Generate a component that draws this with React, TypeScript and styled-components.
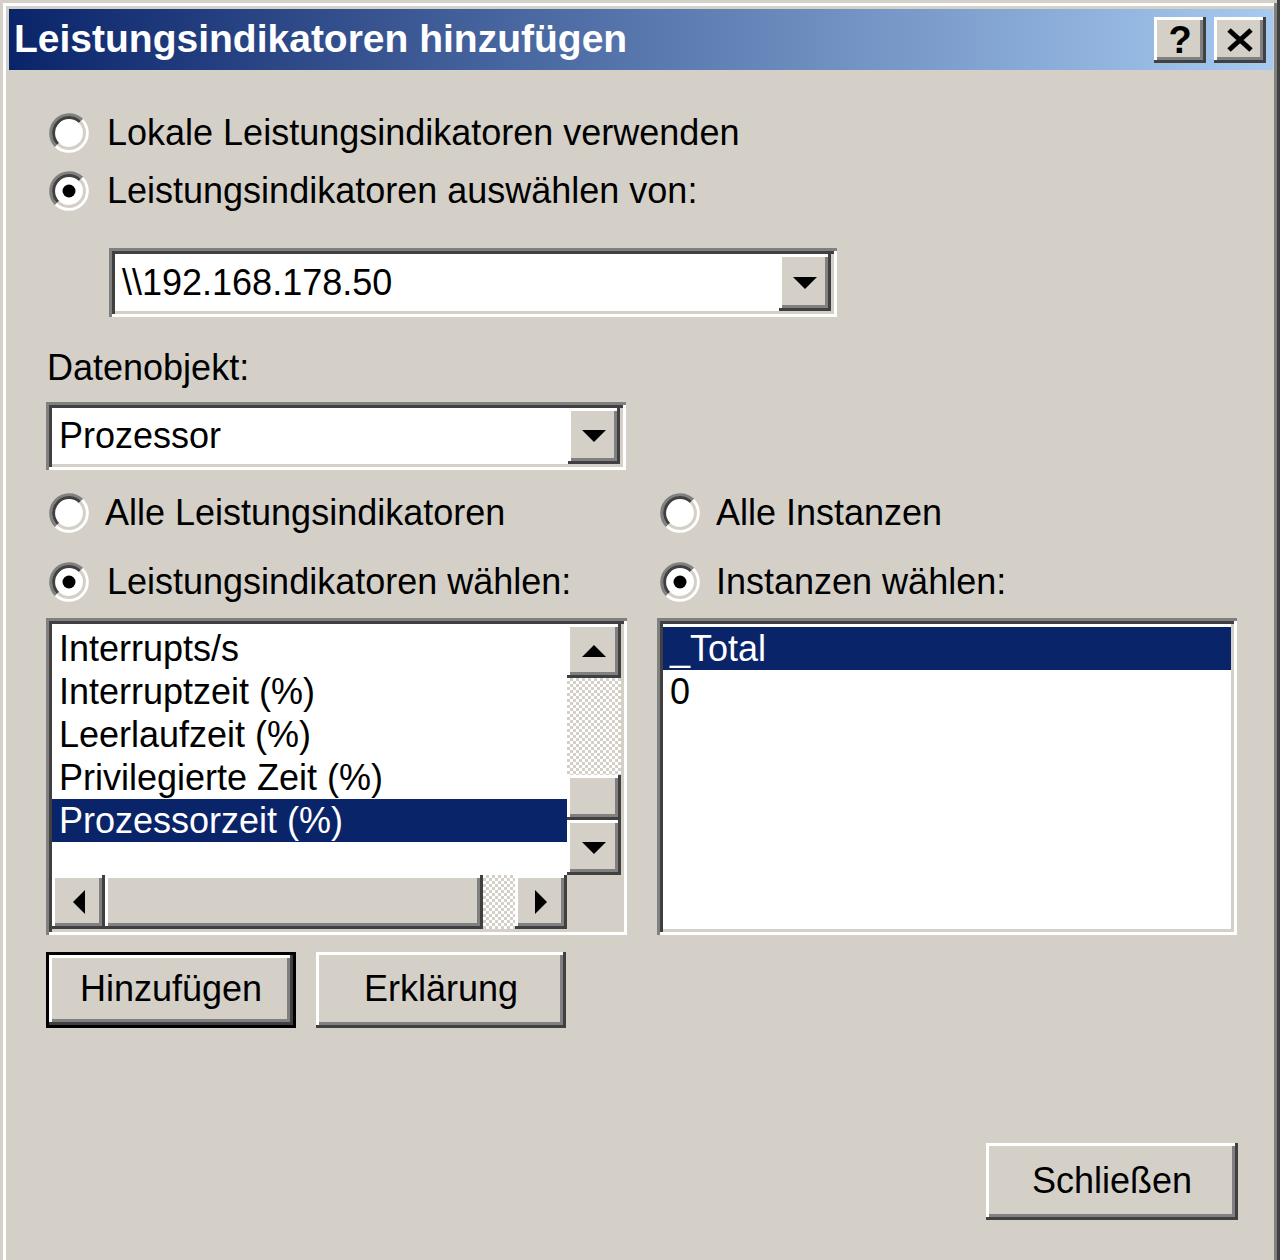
import React from "react";
import styled, { createGlobalStyle, css } from "styled-components";

// Win2000 system colours
const FACE = "#d4d0c8";
const SHADOW = "#808080";
const DARK = "#404040";
const HILITE = "#ffffff";
const SELECT = "#0a246a";

const GlobalStyle = createGlobalStyle`
  html, body {
    margin: 0;
    padding: 0;
    background: ${FACE};
  }
  body {
    font-family: "Liberation Sans", Arial, sans-serif;
    font-size: 36px;
    color: #000;
  }
`;

const raised = css`
  box-shadow: inset -3px -3px ${DARK}, inset 3px 3px ${HILITE},
    inset -6px -6px ${SHADOW}, inset 6px 6px ${FACE};
`;

const sunken = css`
  box-shadow: inset 3px 3px ${SHADOW}, inset -3px -3px ${HILITE},
    inset 6px 6px ${DARK}, inset -6px -6px ${FACE};
`;

const checker = css`
  background: repeating-conic-gradient(${FACE} 0% 25%, #fff 0% 50%) 0 0 / 6px
    6px;
`;

/* ---------- window frame ---------- */

const Window = styled.div`
  width: 1280px;
  height: 1260px;
  box-sizing: border-box;
  padding: 9px 7px 0 9px;
  background: ${FACE};
  box-shadow: inset -3px 0 ${DARK}, inset 3px 3px ${FACE},
    inset -6px 0 ${SHADOW}, inset 6px 6px ${HILITE};
  display: flex;
  flex-direction: column;
`;

const TitleBar = styled.div`
  height: 61px;
  flex-shrink: 0;
  display: flex;
  align-items: center;
  padding: 0 7px 0 5px;
  background: linear-gradient(90deg, ${SELECT} 0%, #a6caf0 100%);
`;

const TitleText = styled.div`
  flex: 1;
  color: #fff;
  font-weight: bold;
  font-size: 39px;
  line-height: 1;
  padding-bottom: 2px;
`;

const TitleButton = styled.div`
  width: 52px;
  height: 46px;
  margin-left: 8px;
  background: ${FACE};
  ${raised};
  display: grid;
  place-items: center;
  font-weight: bold;
  font-size: 38px;
  line-height: 1;
`;

/* ---------- body ---------- */

const Body = styled.div`
  flex: 1;
  display: flex;
  flex-direction: column;
  padding: 0 35px 0 37px;
`;

const RadioGroup = styled.div<{ $top: number; $gap: number }>`
  display: flex;
  flex-direction: column;
  gap: ${(p) => p.$gap}px;
  margin-top: ${(p) => p.$top}px;
`;

const RadioRow = styled.label<{ $gap?: number }>`
  height: 58px;
  display: flex;
  align-items: center;
  gap: ${(p) => p.$gap ?? 18}px;
  white-space: nowrap;
`;

const RadioSvg = styled.svg`
  width: 40px;
  height: 40px;
  margin-left: 3px;
  flex-shrink: 0;
`;

const Radio: React.FC<{ checked?: boolean }> = ({ checked }) => (
  <RadioSvg viewBox="0 0 40 40">
    <circle cx="20" cy="20" r="17" fill="#fff" />
    <path d="M6.92 33.08 A18.5 18.5 0 0 1 33.08 6.92" stroke={SHADOW} strokeWidth="3" fill="none" />
    <path d="M33.08 6.92 A18.5 18.5 0 0 1 6.92 33.08" stroke={HILITE} strokeWidth="3" fill="none" />
    <path d="M9.04 30.96 A15.5 15.5 0 0 1 30.96 9.04" stroke={DARK} strokeWidth="3" fill="none" />
    <path d="M30.96 9.04 A15.5 15.5 0 0 1 9.04 30.96" stroke={FACE} strokeWidth="3" fill="none" />
    {checked && <circle cx="20" cy="20" r="6.5" fill="#000" />}
  </RadioSvg>
);

const Combo = styled.div<{ $width: number; $height: number; $top: number; $indent?: number }>`
  width: ${(p) => p.$width}px;
  height: ${(p) => p.$height}px;
  margin-top: ${(p) => p.$top}px;
  margin-left: ${(p) => p.$indent ?? 0}px;
  box-sizing: border-box;
  padding: 6px;
  background: #fff;
  ${sunken};
  display: flex;
  align-items: center;
`;

const ComboText = styled.div`
  flex: 1;
  padding-left: 7px;
  white-space: nowrap;
`;

const DropButton = styled.div`
  width: 52px;
  align-self: stretch;
  background: ${FACE};
  ${raised};
  display: grid;
  place-items: center;
`;

const Arrow: React.FC<{ dir: "up" | "down" | "left" | "right" }> = ({ dir }) => {
  const pts = {
    down: "0,0 24,0 12,12",
    up: "12,0 24,12 0,12",
    left: "12,0 12,24 0,12",
    right: "0,0 12,12 0,24",
  }[dir];
  const vertical = dir === "up" || dir === "down";
  return (
    <svg width={vertical ? 24 : 12} height={vertical ? 12 : 24} viewBox={vertical ? "0 0 24 12" : "0 0 12 24"}>
      <polygon points={pts} fill="#000" />
    </svg>
  );
};

const Label = styled.div<{ $top: number }>`
  margin-top: ${(p) => p.$top}px;
  height: 44px;
  line-height: 44px;
  padding-left: 1px;
`;

const Columns = styled.div`
  display: grid;
  grid-template-columns: 581px 580px;
  column-gap: 30px;
  margin-top: 14px;
`;

const Column = styled.div`
  display: flex;
  flex-direction: column;
`;

const ListFrame = styled.div`
  height: 317px;
  margin-top: 7px;
  box-sizing: border-box;
  padding: 6px;
  background: #fff;
  ${sunken};
`;

const ScrollList = styled.div`
  height: 100%;
  display: grid;
  grid-template-columns: 1fr 54px;
  grid-template-rows: 1fr 54px;
`;

const Items = styled.div`
  padding-top: 3px;
  overflow: hidden;
  background: #fff;
`;

const Item = styled.div<{ $selected?: boolean }>`
  height: 43px;
  line-height: 43px;
  padding-left: 7px;
  white-space: nowrap;
  background: ${(p) => (p.$selected ? SELECT : "transparent")};
  color: ${(p) => (p.$selected ? "#fff" : "#000")};
`;

const VScroll = styled.div`
  display: flex;
  flex-direction: column;
`;

const HScroll = styled.div`
  display: flex;
`;

const ScrollButton = styled.div<{ $size?: number }>`
  flex: ${(p) => (p.$size ? `0 0 ${p.$size}px` : "1")};
  background: ${FACE};
  ${raised};
  display: grid;
  place-items: center;
`;

const Track = styled.div<{ $size: number }>`
  flex: 0 0 ${(p) => p.$size}px;
  ${checker};
`;

const Corner = styled.div`
  background: ${FACE};
`;

const ButtonRow = styled.div`
  display: flex;
  gap: 20px;
  margin-top: 17px;
`;

const PushButton = styled.div<{ $default?: boolean; $width: number; $height: number }>`
  width: ${(p) => p.$width}px;
  height: ${(p) => p.$height}px;
  box-sizing: border-box;
  background: ${FACE};
  display: grid;
  place-items: center;
  padding-bottom: 2px;
  ${(p) =>
    p.$default
      ? css`
          border: 3px solid #000;
          ${raised};
        `
      : raised};
`;

const Footer = styled.div`
  display: flex;
  justify-content: flex-end;
  margin-top: 115px;
`;

const counters = [
  "Interrupts/s",
  "Interruptzeit (%)",
  "Leerlaufzeit (%)",
  "Privilegierte Zeit (%)",
  "Prozessorzeit (%)",
];

export default function App() {
  return (
    <>
      <GlobalStyle />
      <Window>
        <TitleBar>
          <TitleText>Leistungsindikatoren hinzufügen</TitleText>
          <TitleButton>?</TitleButton>
          <TitleButton>
            <svg width="28" height="24" viewBox="0 0 28 24">
              <path d="M3 2 L25 22 M25 2 L3 22" stroke="#000" strokeWidth="5" />
            </svg>
          </TitleButton>
        </TitleBar>

        <Body>
          <RadioGroup $top={34} $gap={0}>
            <RadioRow>
              <Radio />
              Lokale Leistungsindikatoren verwenden
            </RadioRow>
            <RadioRow>
              <Radio checked />
              Leistungsindikatoren auswählen von:
            </RadioRow>
          </RadioGroup>

          <Combo $width={728} $height={69} $top={28} $indent={63}>
            <ComboText>\\192.168.178.50</ComboText>
            <DropButton>
              <Arrow dir="down" />
            </DropButton>
          </Combo>

          <Label $top={29}>Datenobjekt:</Label>

          <Combo $width={580} $height={68} $top={12}>
            <ComboText>Prozessor</ComboText>
            <DropButton>
              <Arrow dir="down" />
            </DropButton>
          </Combo>

          <Columns>
            <Column>
              <RadioGroup $top={0} $gap={11}>
                <RadioRow $gap={16}>
                  <Radio />
                  Alle Leistungsindikatoren
                </RadioRow>
                <RadioRow>
                  <Radio checked />
                  Leistungsindikatoren wählen:
                </RadioRow>
              </RadioGroup>
              <ListFrame>
                <ScrollList>
                  <Items>
                    {counters.map((c, i) => (
                      <Item key={c} $selected={i === counters.length - 1}>
                        {c}
                      </Item>
                    ))}
                  </Items>
                  <VScroll>
                    <ScrollButton $size={54}>
                      <Arrow dir="up" />
                    </ScrollButton>
                    <Track $size={97} />
                    <ScrollButton $size={45} />
                    <ScrollButton>
                      <Arrow dir="down" />
                    </ScrollButton>
                  </VScroll>
                  <HScroll>
                    <ScrollButton $size={53}>
                      <Arrow dir="left" />
                    </ScrollButton>
                    <ScrollButton $size={378} />
                    <Track $size={32} />
                    <ScrollButton>
                      <Arrow dir="right" />
                    </ScrollButton>
                  </HScroll>
                  <Corner />
                </ScrollList>
              </ListFrame>
            </Column>

            <Column>
              <RadioGroup $top={0} $gap={11}>
                <RadioRow $gap={16}>
                  <Radio />
                  Alle Instanzen
                </RadioRow>
                <RadioRow $gap={16}>
                  <Radio checked />
                  Instanzen wählen:
                </RadioRow>
              </RadioGroup>
              <ListFrame>
                <Items>
                  <Item $selected>_Total</Item>
                  <Item>0</Item>
                </Items>
              </ListFrame>
            </Column>
          </Columns>

          <ButtonRow>
            <PushButton $default $width={250} $height={76}>
              Hinzufügen
            </PushButton>
            <PushButton $width={250} $height={76}>
              Erklärung
            </PushButton>
          </ButtonRow>

          <Footer>
            <PushButton $width={252} $height={77}>
              Schließen
            </PushButton>
          </Footer>
        </Body>
      </Window>
    </>
  );
}
